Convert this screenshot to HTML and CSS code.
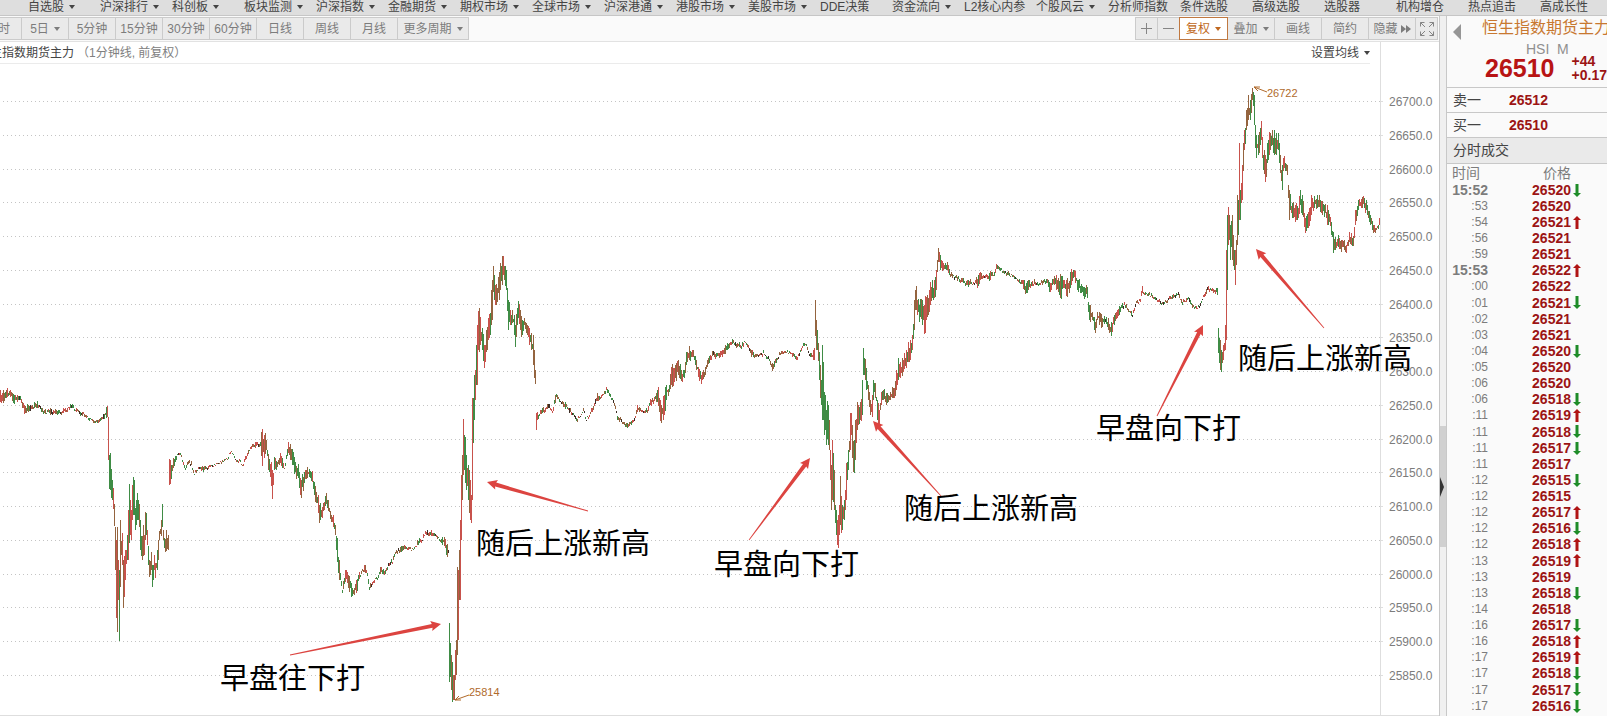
FILE: index.html
```html
<!DOCTYPE html>
<html lang="zh-CN">
<head>
<meta charset="utf-8">
<title>恒生指数期货主力</title>
<link rel="stylesheet" href="styles.css">
</head>
<body>
<nav class="nav">
  <a class="nav-item menu" href="#">自选股</a>
  <a class="nav-item menu" href="#">沪深排行</a>
  <a class="nav-item menu" href="#">科创板</a>
  <a class="nav-item menu" href="#">板块监测</a>
  <a class="nav-item menu" href="#">沪深指数</a>
  <a class="nav-item menu" href="#">金融期货</a>
  <a class="nav-item menu" href="#">期权市场</a>
  <a class="nav-item menu" href="#">全球市场</a>
  <a class="nav-item menu" href="#">沪深港通</a>
  <a class="nav-item menu" href="#">港股市场</a>
  <a class="nav-item menu" href="#">美股市场</a>
  <a class="nav-item" href="#">DDE决策</a>
  <a class="nav-item menu" href="#">资金流向</a>
  <a class="nav-item" href="#">L2核心内参</a>
  <a class="nav-item menu" href="#">个股风云</a>
  <a class="nav-item" href="#">分析师指数</a>
  <a class="nav-item" href="#">条件选股</a>
  <a class="nav-item" href="#">高级选股</a>
  <a class="nav-item" href="#">选股器</a>
  <a class="nav-item" href="#">机构增仓</a>
  <a class="nav-item" href="#">热点追击</a>
  <a class="nav-item" href="#">高成长性</a>
</nav>
<div class="workspace">
  <main class="main">
    <div class="toolbar">
      <div class="group periods">
        <button class="tool">分时</button>
        <button class="tool menu">5日</button>
        <button class="tool">5分钟</button>
        <button class="tool">15分钟</button>
        <button class="tool">30分钟</button>
        <button class="tool">60分钟</button>
        <button class="tool">日线</button>
        <button class="tool">周线</button>
        <button class="tool">月线</button>
        <button class="tool wide menu">更多周期</button>
      </div>
      <div class="group">
        <button class="tool small" aria-label="放大"><svg width="13" height="13" viewBox="0 0 13 13"><path d="M1 6.500H12M6.500 1V12"/></svg></button>
        <button class="tool small" aria-label="缩小"><svg width="13" height="13" viewBox="0 0 13 13"><path d="M1 6.500H12"/></svg></button>
        <button class="tool active menu">复权</button>
        <button class="tool menu">叠加</button>
        <button class="tool">画线</button>
        <button class="tool">简约</button>
        <button class="tool hide">隐藏<svg width="10" height="8" viewBox="0 0 10 8"><path class="solid" d="M0 0L5 4L0 8ZM5 0L10 4L5 8Z"/></svg></button>
        <button class="tool small" aria-label="全屏"><svg width="14" height="14" viewBox="0 0 14 14"><path d="M.5 4.500V.5H4.500M.5 .5L5 5M9.500 .5H13.500V4.500M13.500 .5L9 5M.5 9.500V13.500H4.500M.5 13.500L5 9M9.500 13.500H13.500V9.500M13.500 13.500L9 9"/></svg></button>
      </div>
    </div>
    <div class="chart-head">
      <h1 class="chart-title">恒生指数期货主力</h1>
      <span class="chart-note">（1分钟线, 前复权）</span>
      <button class="average menu">设置均线</button>
    </div>
    <svg class="chart" id="chart" viewBox="0 64 1439 652">
      <g id="grid"></g>
      <path class="axis" d="M1380.500 42V715"/>
      <path class="axis" d="M0 715.500H1439"/>
      <g id="bars" shape-rendering="crispEdges"></g>
      <path class="leader" d="M1267 92L1254 87M1254 87H1260M1254 87L1258 91"/>
      <text class="extreme" x="1267" y="97">26722</text>
      <path class="leader" d="M469 695L455 700M455 700L459 696M455 700H461"/>
      <text class="extreme" x="469" y="696">25814</text>
      <g id="arrows"></g>
      <g class="notes">
        <text x="220" y="689">早盘往下打</text>
        <text x="476" y="554">随后上涨新高</text>
        <text x="714" y="575">早盘向下打</text>
        <text x="904" y="519">随后上涨新高</text>
        <text x="1096" y="439">早盘向下打</text>
        <text x="1238" y="369">随后上涨新高</text>
      </g>
    </svg>
  </main>
  <div class="splitter"><button class="thumb" aria-label="收起侧栏"></button></div>
  <aside class="quote">
    <header class="summary">
      <button class="back" aria-label="返回"></button>
      <h2 class="name">恒生指数期货主力</h2>
      <div class="code">HSI&nbsp; M</div>
      <div class="last">
        <strong class="last-price">26510</strong>
        <div class="change"><span>+44</span><span>+0.17%</span></div>
      </div>
    </header>
    <div class="level"><span>卖一</span><b>26512</b></div>
    <div class="level"><span>买一</span><b>26510</b></div>
    <h3 class="section">分时成交</h3>
    <table class="ticks">
      <thead><tr><th class="time">时间</th><th class="price">价格</th><th></th></tr></thead>
      <tbody id="ticks"></tbody>
    </table>
  </aside>
</div>
<script src="chart.js"></script>
</body>
</html>
```

FILE: styles.css
```css
* { box-sizing: border-box; }
body {
  margin: 0;
  height: 100vh;
  overflow: hidden;
  display: flex;
  flex-direction: column;
  background: #fff;
  color: #444;
  font: 12px/14px "Liberation Sans", "Noto Sans CJK SC", sans-serif;
}
button {
  margin: 0;
  padding: 0;
  border: 0;
  background: none;
  color: inherit;
  font: inherit;
}
h1, h2, h3 { margin: 0; font: inherit; }

.menu::after {
  content: "";
  flex: none;
  margin-left: 5px;
  border: 3px solid transparent;
  border-top: 4px solid currentColor;
  border-bottom: 0;
}

.nav {
  flex: none;
  display: grid;
  grid-auto-flow: column;
  grid-auto-columns: 72px;
  justify-content: start;
  height: 16px;
  padding-left: 28px;
  overflow: hidden;
  background: #dedede;
  border-bottom: 1px solid #c6c6c6;
}
.nav-item {
  display: flex;
  align-items: center;
  height: 13px;
  white-space: nowrap;
  color: #444;
  text-decoration: none;
}

.workspace { flex: 1; min-height: 0; display: flex; }
.main { flex: 1; min-width: 0; }

.toolbar {
  display: flex;
  justify-content: space-between;
  height: 26px;
  padding: 1px 1px 0 0;
  background: #fafafa;
  border-bottom: 1px solid #e2e2e2;
}
.group {
  display: flex;
  height: 23px;
  background: #eaeaea;
  border: 1px solid #cbcbcb;
  border-right: 0;
  color: #7c7c7c;
}
.periods { margin-left: -26px; }
.tool {
  display: flex;
  align-items: center;
  justify-content: center;
  width: 47px;
  white-space: nowrap;
  border-right: 1px solid #cbcbcb;
}
.tool.wide { width: 71px; }
.tool.small { width: 22px; }
.tool.active {
  width: 49px;
  margin: -1px 0 -1px -1px;
  border: 1px solid #c07840;
  background: #fff;
  color: #c06820;
}
.tool svg { fill: none; stroke: #858585; }
.tool .solid { fill: #7c7c7c; stroke: none; }
.tool.hide { gap: 3px; }

.chart-head {
  display: flex;
  align-items: center;
  height: 22px;
  margin-right: 69px;
  border-bottom: 1px solid #ebebeb;
  white-space: nowrap;
}
.chart-title { margin-left: -22px; }
.chart-note { margin-left: 3px; color: #808080; }
.average { display: flex; align-items: center; margin-left: auto; }

.chart { display: block; width: 100%; overflow: visible; }
.chart text { font-family: "Liberation Sans", "Noto Sans CJK SC", sans-serif; }
.grid-line { stroke: #c4c4c4; stroke-dasharray: 1 3; }
.grid-label { fill: #7c7c7c; font-size: 12px; }
.axis { stroke: #dedede; fill: none; }
.leader { stroke: #b06a2c; fill: none; }
.extreme { fill: #b06a2c; font-size: 11px; }
.arrow { fill: #dc4440; }
.notes { fill: #000; font-size: 29px; }

.splitter {
  display: flex;
  align-items: center;
  width: 8px;
  padding-top: 241px;
  background: #f0f0f0;
  border: 1px solid #c8c8c8;
  border-width: 0 1px;
}
.thumb {
  display: flex;
  align-items: center;
  width: 100%;
  height: 121px;
  background: #d0d0d0;
}
.thumb::after {
  content: "";
  border: 10px solid transparent;
  border-left: 4px solid #333;
  border-right: 0;
}

.quote {
  flex: none;
  width: 160px;
  overflow: hidden;
  background: #fafafa;
  font-size: 14px;
}
.summary {
  display: grid;
  grid-template-columns: 29px 1fr;
  grid-template-rows: 24px 18px 19px;
  height: 72px;
  padding-left: 6px;
  white-space: nowrap;
  border-bottom: 1px solid #c8c8c8;
}
.back {
  grid-row: 1;
  align-self: end;
  justify-self: start;
  border: 8px solid transparent;
  border-right-color: #969696;
  border-left: 0;
}
.name { grid-column: 2; font-size: 16px; line-height: 24px; color: #c87830; }
.code { grid-column: 2; padding-left: 44px; line-height: 18px; color: #909090; }
.last { grid-column: 2; display: flex; align-items: center; gap: 17px; padding-left: 3px; color: #9c1414; }
.last-price { font-size: 25px; line-height: 22px; color: #b81414; }
.change { display: flex; flex-direction: column; font-weight: bold; line-height: 14px; }
.level {
  display: flex;
  align-items: center;
  gap: 28px;
  height: 25px;
  padding-left: 6px;
  border-bottom: 1px solid #c8c8c8;
}
.level b { color: #9c1414; }
.section {
  height: 26px;
  padding-left: 6px;
  line-height: 24px;
  background: #eaeaea;
  border-bottom: 1px solid #c8c8c8;
}
.ticks { width: 160px; border-collapse: collapse; table-layout: fixed; }
.ticks th, .ticks td { height: 16px; padding: 0; font-weight: normal; line-height: 16px; }
.ticks th { height: 18px; color: #7c7c7c; }
.ticks .time { width: 41px; text-align: right; color: #7c7c7c; }
.ticks th.time { padding-right: 8px; }
.ticks td.time { font-size: 12px; }
.ticks td.time.minute { font-size: 14px; font-weight: bold; }
.ticks .price { width: 83px; text-align: right; }
.ticks td.price { font-weight: bold; color: #9c1414; }
.ticks tbody tr:nth-child(8n) td { height: 17px; }
.ticks svg { display: block; margin-left: 2px; }
.up { fill: #b01414; }
.down { fill: #1e8c28; }
```

FILE: chart.js
```js
const NS = "http://www.w3.org/2000/svg";
function add(parent, tag, attrs, text) {
  const el = document.createElementNS(NS, tag);
  for (const k in attrs) el.setAttribute(k, attrs[k]);
  if (text) el.textContent = text;
  parent.appendChild(el);
  return el;
}

// Price grid
const grid = document.getElementById("grid");
for (let i = 0; i < 18; i++) {
  const y = Math.round(101 + i * 33.76);
  add(grid, "path", { class: "grid-line", d: `M3 ${y + 0.5}H1380` });
  add(grid, "path", { class: "axis", d: `M1380 ${y + 0.5}H1383` });
  add(grid, "text", { class: "grid-label", x: 1389, y: y + 5 }, (26700 - i * 50) + ".0");
}

// Sessions: "x high low" triples, in chart units
const sessions = [
`0 390 402,3 390 403,10 390 397,14 395 404,20 396 401,24 405 414,30 405 411,37 401 408,43 408 414,50 408 415,60 409 415,65 409 414,70 403 408,76 407 412,83 411 416,90 418 421,97 420 424,104 412 418,107 406 417,108 417 460,109 455 489,110 453 490,112 480 500,114 504 526,115 527 570,116 540 618,117 527 632,118 560 600,119 570 641,120 520 587,122 533 565,123 560 608,124 556 597,125 550 580,127 535 560,128 510 560,129 484 543,130 500 535,131 510 540,132 485 520,133 477 515,134 480 515,135 508 530,136 500 525,137 493 520,138 500 520,140 520 550,142 536 560,143 525 556,144 535 555,145 512 540,146 513 535,147 530 545,149 560 577,151 552 570,152 565 587,153 565 580,154 555 570,155 563 578,157 550 570,158 540 560,159 531 540,161 520 536,162 504 527,163 530 540,164 538 548,166 530 551,168 535 550`,
`169 459 485,171 465 479,173 458 468,177 453 457,180 452 455,183 463 466,185 468 471,188 459 464,191 462 467,194 472 476,197 466 471,203 466 471,210 465 468,222 461 463,228 456 458,231 450 452,236 458 461,243 463 466,246 453 458,250 447 451,255 441 447,260 442 448,262 429 466,264 435 458,266 440 450,268 454 470,270 464 477,272 470 499,273 473 485,274 457 470,276 461 470,280 453 463,284 465 469,286 455 461,288 442 453,291 449 460,293 452 465,294 457 474,298 464 478,301 480 498,304 472 483,307 467 478,309 469 477,312 471 482,314 482 495,316 492 503,318 495 513,319 505 523,322 507 518,324 502 510,326 493 504,330 511 519,333 515 527,335 525 535,337 538 562,339 560 580,342 588 593,345 570 582,348 575 588,351 583 597,354 588 595,356 580 593,359 572 579,362 568 573,365 565 573,367 573 577,369 585 591,373 579 583,378 575 578,380 567 574,384 570 575,388 563 568,392 558 564,395 550 554,400 546 552,407 545 550,413 549 551,417 540 546,421 539 543,425 529 535,430 530 536,435 534 538,440 537 542,444 537 546,447 544 557,448 547 552`,
`449 623 682,451 655 690,453 675 700,454 675 700,455 650 680,456 640 675,457 567 655,458 570 640,459 550 600,460 520 600,461 475 540,462 455 500,463 419 475,464 435 470,466 455 490,468 465 500,470 480 520,471 495 523,472 398 500,473 398 443,474 375 420,475 370 400,476 345 385,477 325 385,478 311 350,480 317 345,482 328 350,484 345 368,486 330 352,488 318 340,490 313 335,491 290 325,492 280 320,493 266 292,494 275 300,495 285 305,497 288 302,499 272 300,500 263 290,502 256 285,503 256 275,504 266 280,506 270 290,508 300 330,510 310 325,512 310 323,514 315 335,515 325 347,517 308 325,518 301 318,520 310 330,522 320 335,524 318 325,527 325 335,529 328 345,531 333 350,533 335 365,534 350 378,535 370 384`,
`536 413 430,537 412 420,542 409 415,548 402 408,552 408 413,555 395 403,556 392 397,560 400 404,565 402 409,570 407 413,574 413 417,576 418 422,580 415 417,583 408 411,586 418 421,590 410 415,594 402 408,597 393 401,601 396 400,606 386 391,610 393 398,615 404 408,617 414 420,622 420 424,628 422 427,633 420 424,637 405 412,642 410 413,647 407 413,650 400 406,655 396 401,658 387 406,661 405 423,664 395 415,666 385 400,669 385 392,671 367 385,674 368 382,678 360 375,681 370 381,684 370 378,686 352 365,689 346 360,692 350 357,695 356 365,698 367 377,701 375 384,705 367 375,709 356 363,712 352 358,717 352 358,722 350 357,727 343 350,732 339 344,737 342 348,741 344 350,744 340 344,748 345 350,751 350 357,757 353 357,763 351 355,768 356 360,772 363 371,776 357 363,781 350 354,787 350 353,792 352 356,796 356 361,800 350 354,803 341 346,806 343 346,809 354 357,812 352 358,814 348 360`,
`815 300 336,816 320 350,817 330 350,819 352 380,821 380 405,822 345 420,823 362 420,825 395 430,826 410 445,828 405 445,829 420 450,830 450 480,831 465 510,832 440 500,834 470 510,836 510 535,837 520 545,838 515 548,839 505 535,840 476 525,842 505 530,844 500 520,845 490 510,846 463 500,848 450 470,850 413 450,851 413 435,852 425 458,854 440 473,855 420 460,857 402 430,858 405 425,860 402 420,862 380 415,863 348 375,864 358 375,866 368 390,868 385 400,870 400 415,872 395 417,873 380 400,875 383 398,877 400 420,879 410 425,881 392 405,883 390 400,886 393 405,888 395 402,890 392 400,893 388 398,896 370 390,898 358 380,900 362 378,903 360 372,906 350 368,908 342 362,910 340 360,912 335 350,914 300 330,915 290 310,916 286 310,917 300 315,919 305 322,922 300 325,924 305 334,926 297 320,928 298 315,930 282 305,932 280 298,934 280 298,936 270 290,938 248 262,940 255 270,943 263 270,947 262 270,951 272 278,956 276 280,962 278 284,968 280 287,974 281 284,978 275 286,984 273 277,989 273 281,994 270 275,997 263 268,1001 268 272,1008 272 276,1014 276 279,1020 279 283,1026 283 293,1032 280 286,1040 281 285,1046 278 284,1050 283 292,1054 276 285,1058 278 292,1060 274 298,1063 280 288,1067 278 297,1070 272 288,1073 270 278,1075 271 283,1078 280 292,1083 287 296,1087 287 298,1089 305 320,1092 312 320,1095 322 333,1097 312 320,1099 312 325,1102 318 327,1105 316 322,1108 318 330,1111 322 336,1114 315 325,1117 310 318,1121 304 310,1124 301 307,1128 308 312,1132 312 318,1135 302 306,1140 298 302,1142 286 293,1146 291 295,1152 294 298,1158 298 302,1162 303 306,1168 297 301,1174 293 298,1178 292 297,1182 301 304,1188 295 299,1192 303 309,1197 307 310,1200 301 306,1205 290 296,1207 286 292,1212 288 292,1217 288 295`,
`1218 328 353,1220 340 370,1221 350 372,1223 345 360,1225 325 350,1226 250 340,1227 215 290,1228 207 245,1229 215 240,1230 225 260,1232 215 260,1234 250 270,1235 250 285,1236 240 265,1237 195 245,1238 200 235,1239 143 220,1240 190 220,1242 165 200,1244 130 150,1246 110 130,1248 95 120,1250 100 120,1252 88 100,1254 95 125,1256 135 158,1258 135 155,1260 128 145,1261 121 140,1263 155 170,1265 155 182,1268 140 160,1270 133 150,1272 130 145,1274 130 155,1276 133 155,1278 133 150,1280 155 173,1282 165 190,1284 156 168,1287 165 175,1289 190 220,1292 203 218,1295 205 222,1298 208 218,1300 190 205,1302 195 215,1305 218 233,1308 212 228,1311 195 215,1314 196 208,1317 195 208,1320 200 212,1324 205 217,1328 210 225,1331 222 235,1333 232 253,1335 237 250,1338 235 247,1341 240 252,1344 240 250,1346 245 253,1349 232 242,1353 236 246,1355 210 225,1358 200 210,1361 199 208,1364 198 208,1367 205 215,1370 215 225,1373 225 233,1376 227 232,1379 218 225`
];

let seed = 7;
function random() {
  seed = (seed * 16807) % 2147483647;
  return seed / 2147483647;
}
const bars = document.getElementById("bars");
const strokes = { "#c8524c": "", "#3f8c45": "", "#94643f": "", "#3c2c24": "" };
for (const session of sessions) {
  const points = session.split(",").map(p => p.trim().split(" ").map(Number));
  for (let i = 0; i < points.length; i++) {
    const a = points[i], b = points[i + 1] || a;
    const before = points[Math.max(0, i - 1)], after = points[Math.min(points.length - 1, i + 2)];
    const rising = after[1] + after[2] < before[1] + before[2];
    for (let x = a[0]; x < Math.max(b[0], a[0] + 1); x++) {
      const t = (x - a[0]) / Math.max(1, b[0] - a[0]);
      let hi = a[1] + (b[1] - a[1]) * t, lo = a[2] + (b[2] - a[2]) * t;
      const range = lo - hi;
      const quiet = range < 7;
      if (quiet) {
        const shift = (random() - 0.5) * 3;
        hi += shift + range * random() * 0.5;
        lo += shift - range * random() * 0.3;
      } else if (t > 0) {
        hi += range * (random() * 0.7 - 0.25);
        lo -= range * (random() * 0.7 - 0.25);
      }
      if (lo < hi + 1) lo = hi + 1 + random();
      const r = random();
      let color = "#94643f";
      if (quiet && r > 0.9) color = "#3c2c24";
      else if (r < 0.45) color = rising ? "#c8524c" : "#3f8c45";
      else if (r < 0.65) color = rising ? "#3f8c45" : "#c8524c";
      strokes[color] += `M${x + 0.5} ${Math.round(hi)}V${Math.round(lo)}`;
    }
  }
}
for (const color in strokes) add(bars, "path", { stroke: color, d: strokes[color] });

// Tapered arrows: tail x, tail y, tip x, tip y
const arrows = [
  [290, 655, 441, 624], [588, 511, 487, 482], [749, 540, 810, 458],
  [941, 496, 873, 421], [1157, 416, 1203, 325], [1324, 328, 1256, 249]
];
for (const [x0, y0, x1, y1] of arrows) {
  const len = Math.hypot(x1 - x0, y1 - y0), ux = (x1 - x0) / len, uy = (y1 - y0) / len;
  const at = (back, side) => `${(x1 - ux * back - uy * side).toFixed(1)},${(y1 - uy * back + ux * side).toFixed(1)}`;
  add(document.getElementById("arrows"), "polygon", {
    class: "arrow",
    points: [at(0, 0), at(10, 5), at(9, 2), at(len, 0.4), at(len, -0.4), at(9, -2), at(10, -5)].join(" ")
  });
}

// Trades: time, price, direction
const trades = `15:52 26520 d,:53 26520,:54 26521 u,:56 26521,:59 26521,15:53 26522 u,:00 26522,:01 26521 d,:02 26521,:03 26521,:04 26520 d,:05 26520,:06 26520,:06 26518 d,:11 26519 u,:11 26518 d,:11 26517 d,:11 26517,:12 26515 d,:12 26515,:12 26517 u,:12 26516 d,:12 26518 u,:13 26519 u,:13 26519,:13 26518 d,:14 26518,:16 26517 d,:16 26518 u,:17 26519 u,:17 26518 d,:17 26517 d,:17 26516 d`;
const icons = {
  u: '<svg class="up" width="8" height="13" viewBox="0 0 8 13"><path d="M4 0L8 4H5.500V13H2.500V4H0Z"/></svg>',
  d: '<svg class="down" width="8" height="13" viewBox="0 0 8 13"><path d="M4 13L8 9H5.500V0H2.500V9H0Z"/></svg>'
};
document.getElementById("ticks").innerHTML = trades.split(",").map(row => {
  const [time, price, dir] = row.split(" ");
  const minute = time.length > 3 ? " minute" : "";
  return `<tr><td class="time${minute}">${time}</td><td class="price">${price}</td><td>${icons[dir] || ""}</td></tr>`;
}).join("");
```
